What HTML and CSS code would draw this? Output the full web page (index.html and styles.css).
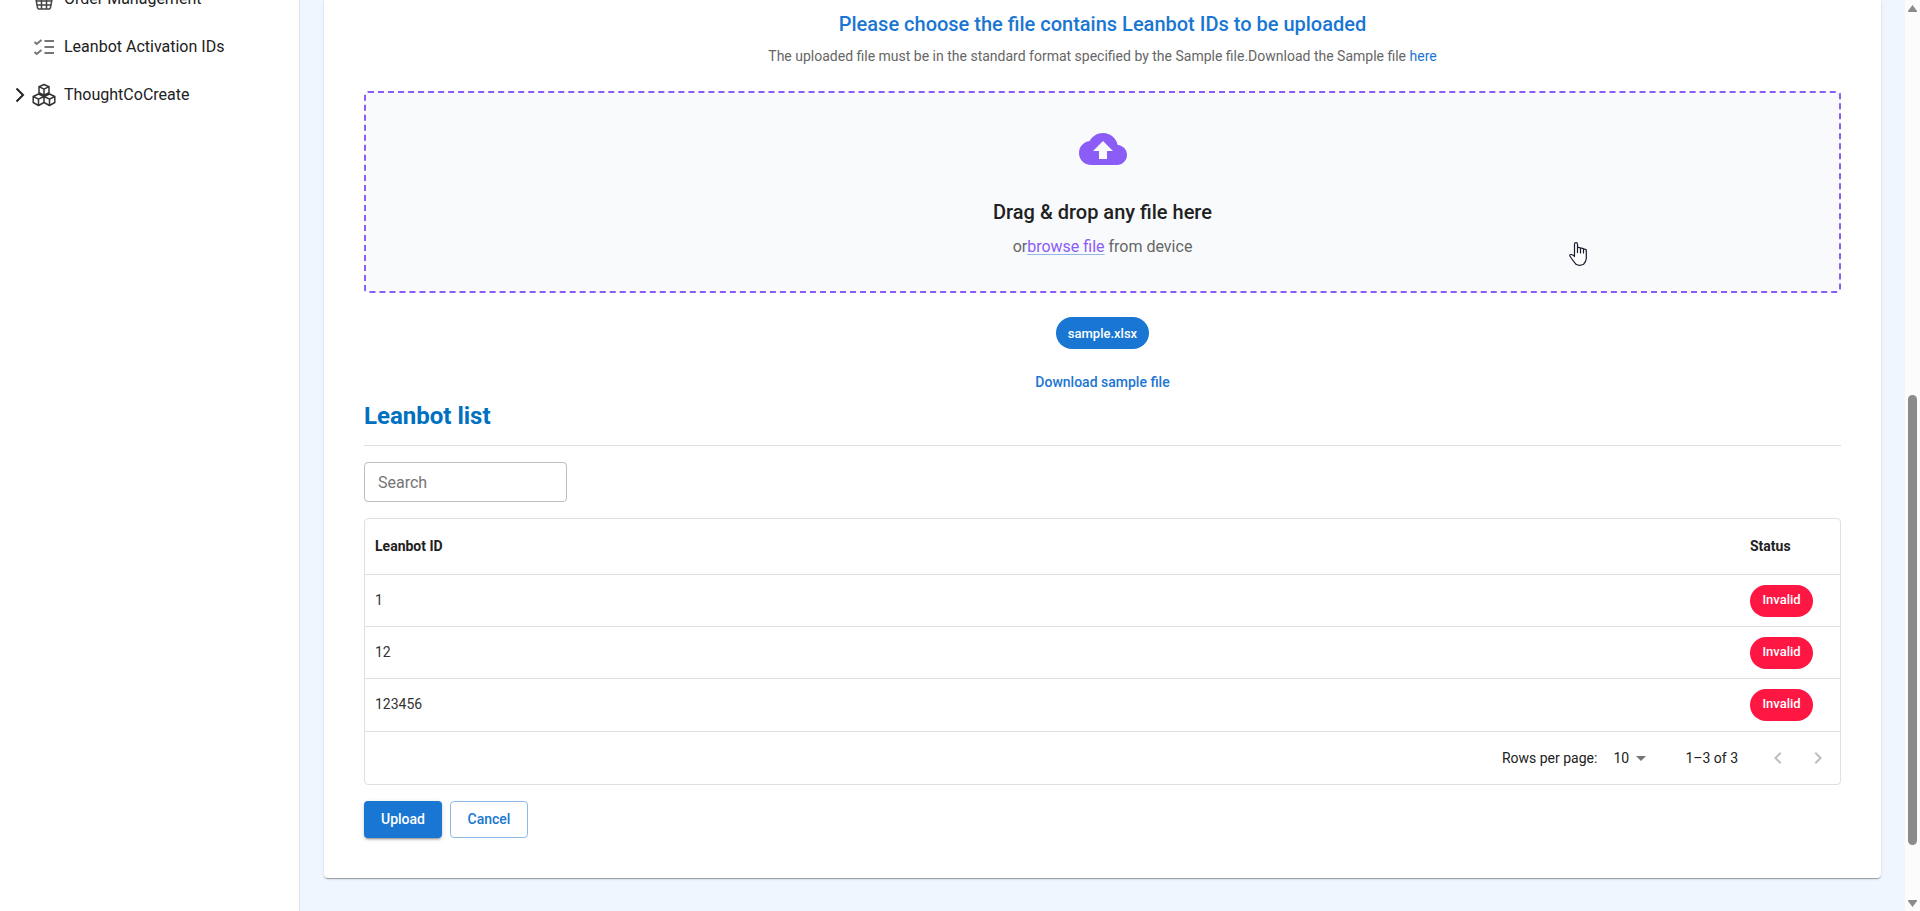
FILE: index.html
```html
<!DOCTYPE html>
<html lang="en">
<head>
<meta charset="utf-8">
<meta name="viewport" content="width=device-width, initial-scale=1">
<title>Leanbot Activation IDs</title>
<link rel="stylesheet" href="styles.css">
</head>
<body>
<div class="app">
  <nav class="sidebar">
    <a class="nav-item" href="#orders">
      <span class="nav-expander"></span>
      <svg class="nav-icon" viewBox="0 0 24 24" fill="none" stroke="#444" stroke-width="1.500"><path d="M2 9h20M3.500 10l2 10.500q.3 1.500 1.300 1.500h10.400q1 0 1.300-1.500l2-10.500M9.500 10v12M14.500 10v12M4 14h16M5 18h14"/></svg>
      <span>Order Management</span>
    </a>
    <a class="nav-item" href="#ids">
      <span class="nav-expander"></span>
      <svg class="nav-icon" viewBox="0 0 24 24" fill="none" stroke="#757575" stroke-width="2"><path d="M12.500 6H22M12.500 12H22M12.500 18H22M2.500 7l2.200 2L9.500 5M2.500 17l2.200 2 4.800-4"/></svg>
      <span>Leanbot Activation IDs</span>
    </a>
    <a class="nav-item" href="#tcc">
      <span class="nav-expander"><svg class="expander-icon" viewBox="0 0 10 16" fill="none" stroke="#222" stroke-width="2"><path d="M1.500 1.500 8 8l-6.500 6.500"/></svg></span>
      <svg class="nav-icon" viewBox="0 0 24 24" fill="none" stroke="#333" stroke-width="1.500" stroke-linejoin="round"><path d="M12 1.500l5 2.200v6L12 12.200 7 9.700v-6zM7 3.700 12 6.200l5-2.500M12 6.200v6M6.500 11l5.500 2.500v6l-5.500 3L1.200 19.500v-6zM1.200 13.500l5.300 2.700 5.500-2.700M6.500 16.200v6.300M17.500 11l5.300 2.500v6l-5.300 3-5.500-3v-6zM12 13.500l5.500 2.700 5.300-2.700M17.500 16.200v6.300"/></svg>
      <span>ThoughtCoCreate</span>
    </a>
  </nav>

  <main class="main">
    <section class="card">
      <header class="intro">
        <h1 class="intro-title">Please choose the file contains Leanbot IDs to be uploaded</h1>
        <p class="intro-text">The uploaded file must be in the standard format specified by the Sample file.Download the Sample file <a class="link" href="#sample">here</a></p>
      </header>

      <div class="dropzone">
        <svg class="cloud" viewBox="0 0 24 24" fill="#8b5cf6"><path d="M19.350 10.040C18.670 6.590 15.640 4 12 4 9.110 4 6.600 5.640 5.350 8.040 2.340 8.360 0 10.910 0 14c0 3.310 2.690 6 6 6h13c2.760 0 5-2.240 5-5 0-2.640-2.050-4.780-4.650-4.960zM14 13v4h-4v-4H7l5-5 5 5h-3z"/></svg>
        <h2 class="drop-title">Drag &amp; drop any file here</h2>
        <p class="drop-text">or<a class="browse" href="#browse">browse file</a> from device</p>
        <svg class="pointer" viewBox="0 0 18 24" fill="#fff" stroke="#1a1a2e" stroke-width="1.200" stroke-linejoin="round"><path d="M5.500 14.500V2.200Q5.500.7 7 .7T8.500 2.200V10.500 5.800Q9.500 5 11.500 6V11 6.300Q13 5.700 14.500 6.800V11 7.200Q16 6.800 17.300 8V16.500Q17 20 14.500 22.300 10.500 24.300 7 22.300L2.500 16.500.9 14Q.4 12.300 2.500 12.500 4.500 13 5.500 14.500z"/></svg>
      </div>

      <div class="files">
        <span class="chip">sample.xlsx</span>
        <button class="text-button" type="button">Download sample file</button>
      </div>

      <h2 class="list-title">Leanbot list</h2>
      <input class="search" type="text" placeholder="Search" aria-label="Search">

      <div class="table-box">
        <table class="table">
          <thead>
            <tr><th scope="col">Leanbot ID</th><th class="status" scope="col">Status</th></tr>
          </thead>
          <tbody>
            <tr><td>1</td><td class="status"><span class="badge">Invalid</span></td></tr>
            <tr><td>12</td><td class="status"><span class="badge">Invalid</span></td></tr>
            <tr><td>123456</td><td class="status"><span class="badge">Invalid</span></td></tr>
          </tbody>
        </table>
        <div class="pagination">
          <label for="rows">Rows per page:</label>
          <span class="rows">
            <select id="rows" class="rows-select"><option>10</option><option>25</option></select>
            <svg class="rows-arrow" viewBox="0 0 24 24" fill="#757575"><path d="M7 10l5 5 5-5z"/></svg>
          </span>
          <span class="range">1–3 of 3</span>
          <button class="page-button" type="button" aria-label="Previous page" disabled><svg class="page-icon" viewBox="0 0 24 24" fill="#bdbdbd"><path d="M15.410 16.590 10.830 12l4.580-4.590L14 6l-6 6 6 6z"/></svg></button>
          <button class="page-button" type="button" aria-label="Next page" disabled><svg class="page-icon" viewBox="0 0 24 24" fill="#bdbdbd"><path d="M8.590 16.590 13.170 12 8.590 7.410 10 6l6 6-6 6z"/></svg></button>
        </div>
      </div>

      <div class="actions">
        <button class="button button-primary" type="button">Upload</button>
        <button class="button button-outline" type="button">Cancel</button>
      </div>
    </section>
  </main>

  <div class="scrollbar" aria-hidden="true">
    <svg class="scroll-arrow" viewBox="0 0 9 7" fill="#8b8b8b"><path d="M4.500 0 9 6v1H0V6z"/></svg>
    <div class="scroll-before"></div>
    <div class="scroll-thumb"></div>
    <div class="scroll-after"></div>
    <svg class="scroll-arrow" viewBox="0 0 9 7" fill="#8b8b8b"><path d="M4.500 7 9 1V0H0v1z"/></svg>
  </div>
</div>
</body>
</html>
```
FILE: styles.css
```css
* { box-sizing: border-box; }

body {
  margin: 0;
  font-family: Roboto, "Liberation Sans", sans-serif;
  font-size: 14px;
  line-height: 20px;
  color: #212121;
  background: #eff6ff;
}

h1, h2, p { margin: 0; }
button, input, select { font: inherit; color: inherit; }

.app { display: flex; height: 100vh; overflow: hidden; }

/* Sidebar */
.sidebar {
  flex: 0 0 300px;
  background: #fff;
  border-right: 1px solid #dfe3e8;
}
.nav-item {
  display: flex;
  align-items: center;
  height: 48px;
  padding-left: 14px;
  color: #212121;
  font-size: 16px;
  line-height: 24px;
  text-decoration: none;
}
.nav-item:first-child { margin-top: -25px; }
.nav-expander { display: flex; width: 18px; }
.expander-icon { width: 12px; height: 16px; }
.nav-icon { width: 24px; height: 24px; margin-right: 8px; }

/* Content card */
.main { flex: 1; min-width: 0; padding: 0 24px; }
.card {
  padding: 8px 40px 40px;
  background: #fff;
  border-radius: 0 0 4px 4px;
  box-shadow: 0 2px 1px -1px rgba(0, 0, 0, 0.2), 0 1px 1px rgba(0, 0, 0, 0.14), 0 1px 3px rgba(0, 0, 0, 0.12);
}
.intro { text-align: center; margin-bottom: 25px; }
.intro-title {
  color: #1976d2;
  font-size: 20px;
  line-height: 32px;
  font-weight: 500;
  margin-bottom: 6px;
}
.intro-text { color: #666; }
.link { color: #1976d2; text-decoration: none; }

.dropzone {
  position: relative;
  display: flex;
  flex-direction: column;
  align-items: center;
  padding: 32px;
  background: #f8fafc;
  border: 2px dashed #8b5cf6;
  border-radius: 4px;
}
.cloud { width: 48px; height: 48px; margin-bottom: 23px; }
.drop-title { font-size: 20px; line-height: 32px; font-weight: 500; margin-bottom: 7px; }
.drop-text { color: #666; font-size: 16px; line-height: 24px; }
.browse { color: #8b5cf6; text-decoration-color: #90b8e8; text-underline-offset: 2px; }
.pointer { position: absolute; right: 252px; bottom: 25px; width: 18px; height: 24px; }

.files { display: flex; flex-direction: column; align-items: center; gap: 16px; padding-top: 24px; }
.chip {
  padding: 1px 12px 0;
  border-radius: 16px;
  background: #1976d2;
  color: #fff;
  font-size: 13px;
  line-height: 31px;
  font-weight: 500;
}
.text-button {
  padding: 7px 8px 5px;
  border: 0;
  background: none;
  color: #1976d2;
  font-weight: 500;
}

.list-title {
  padding: 3px 0 13px;
  border-bottom: 1px solid #e0e0e0;
  color: #0070c0;
  font-size: 24px;
  line-height: 32px;
  font-weight: 700;
}
.search {
  display: block;
  width: 203px;
  height: 40px;
  margin: 16px 0;
  padding: 0 13px;
  border: 1px solid #bdbdbd;
  border-radius: 4px;
  background: #fff;
  font-size: 16px;
}
.search::placeholder { color: #757575; opacity: 1; }

/* Table */
.table-box { border: 1px solid #e0e0e0; border-radius: 4px; }
.table { width: 100%; border-collapse: separate; border-spacing: 0; }
.table th, .table td { padding: 0 10px 2px; text-align: left; border-bottom: 1px solid #e0e0e0; }
.table th { height: 56px; font-weight: 700; }
.table td { height: 52px; color: #333; }
.table tr:last-child td { height: 53px; }
.table .status { width: 100px; }
.table td.status { padding: 10px 10px 9px; vertical-align: top; }
.badge {
  display: block;
  width: 63px;
  height: 32px;
  border-radius: 16px;
  background: #ff1744;
  color: #fff;
  font-size: 13px;
  line-height: 29px;
  font-weight: 500;
  text-align: center;
}
.pagination { display: flex; align-items: center; justify-content: flex-end; height: 52px; padding: 0 2px 1px 0; }
.rows { display: flex; align-items: center; margin: 0 32px 0 16px; }
.rows-select { width: 28px; padding: 0; border: 0; background: none; appearance: none; }
.rows-arrow { width: 24px; height: 24px; margin-left: -12px; pointer-events: none; }
.range { margin-right: 20px; }
.page-button { display: flex; padding: 8px; border: 0; background: none; }
.page-icon { width: 24px; height: 24px; }

/* Actions */
.actions { display: flex; gap: 8px; margin-top: 16px; }
.button { width: 78px; height: 37px; padding: 0 0 2px; border-radius: 4px; font-weight: 500; }
.button-primary {
  border: 0;
  background: #1976d2;
  color: #fff;
  box-shadow: 0 3px 1px -2px rgba(0, 0, 0, 0.2), 0 2px 2px rgba(0, 0, 0, 0.14), 0 1px 5px rgba(0, 0, 0, 0.12);
}
.button-outline { border: 1px solid #8cbae8; background: #fff; color: #1976d2; }

/* Scrollbar */
.scrollbar {
  flex: 0 0 15px;
  display: flex;
  flex-direction: column;
  align-items: center;
  padding: 5px 0 4px;
  background: #fcfcfc;
}
.scroll-arrow { width: 9px; height: 7px; }
.scroll-before { flex: 383; }
.scroll-thumb { flex: 450; width: 9px; border-radius: 5px; background: #8b8b8b; }
.scroll-after { flex: 55; }
```
